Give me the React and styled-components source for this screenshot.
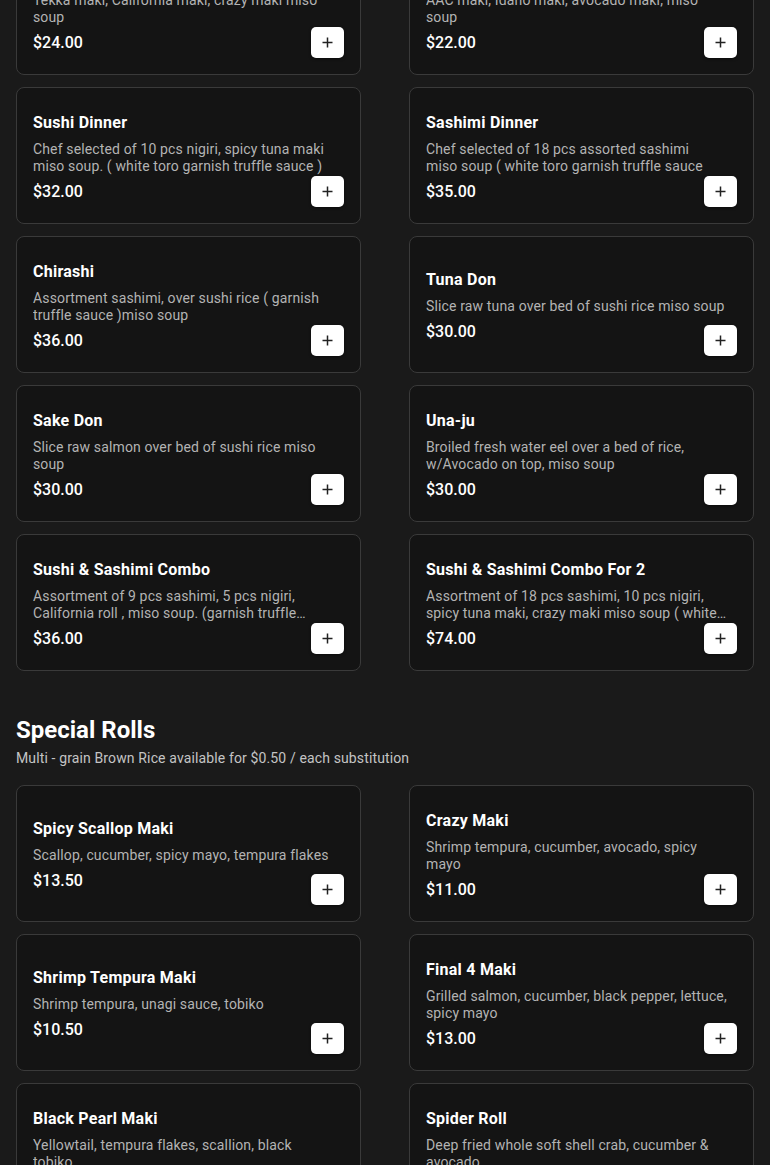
import React from 'react';
import styled, { createGlobalStyle } from 'styled-components';

const GlobalStyle = createGlobalStyle`
    html, body {
        margin: 0;
        padding: 0;
        background: #1a1a1a;
        font-family: Roboto, "Liberation Sans", Arial, sans-serif;
        color: #fff;
    }
    * {
        box-sizing: border-box;
    }
`;

const Page = styled.main`
    padding: 0 16px 40px;
    overflow: hidden;
`;

const Section = styled.section`
    /* the view is scrolled: the first section's header sits above the fold */
    &:first-child {
        margin-top: -62px;
    }
`;

const SectionTitle = styled.h2`
    margin: 45px 0 0;
    font-size: 24px;
    line-height: 28px;
    font-weight: 700;
    color: #fff;
`;

const SectionNote = styled.p`
    margin: 4px 0 17px;
    font-size: 14px;
    line-height: 20px;
    letter-spacing: 0.13px;
    color: #c4c4c4;
`;

const Grid = styled.div`
    display: grid;
    grid-template-columns: 1fr 1fr;
    column-gap: 48px;
    row-gap: 12px;
`;

const Card = styled.article`
    display: grid;
    height: 137px;
    padding: 16px;
    background: #141414;
    border: 1px solid #3a3a3a;
    border-radius: 8px;
`;

const Info = styled.div`
    grid-area: 1 / 1;
    align-self: center;
    padding: 3px 9px 0 0;
    min-width: 0;
`;

const Name = styled.h3`
    margin: 0;
    font-size: 16px;
    line-height: 20px;
    font-weight: 700;
    letter-spacing: 0.25px;
    color: #fff;
`;

const Description = styled.p`
    margin: 8px 0 0;
    font-size: 14px;
    line-height: 17px;
    letter-spacing: 0.14px;
    white-space: pre-line;
    color: #b3b3b3;
    display: -webkit-box;
    -webkit-box-orient: vertical;
    -webkit-line-clamp: 2;
    overflow: hidden;
`;

const Price = styled.div`
    margin-top: 7px;
    font-size: 16px;
    line-height: 20px;
    font-weight: 500;
    color: #fff;
`;

const AddButton = styled.button`
    grid-area: 1 / 1;
    justify-self: end;
    align-self: end;
    width: 33px;
    height: 31px;
    padding: 0;
    border: none;
    border-radius: 5px;
    background: #fff;
    box-shadow: 0 1px 3px rgba(0, 0, 0, 0.5);
    display: flex;
    align-items: center;
    justify-content: center;
    cursor: pointer;
`;

const PlusIcon = () => (
    <svg width="11" height="11" viewBox="0 0 11 11" fill="none">
        <path d="M5.5 0.5v10M0.5 5.5h10" stroke="#222" strokeWidth="1.5" />
    </svg>
);

const MenuCard = ({ item }) => (
    <Card>
        <Info>
            <Name>{item.name}</Name>
            <Description>{item.description}</Description>
            <Price>{item.price}</Price>
        </Info>
        <AddButton aria-label={`Add ${item.name}`}>
            <PlusIcon />
        </AddButton>
    </Card>
);

const sections = [
    {
        title: null,
        items: [
            { name: 'Maki Combo', description: 'Tekka maki, California maki, crazy maki miso soup', price: '$24.00' },
            { name: 'Vegetable Maki Combo', description: 'AAC maki, Idaho maki, avocado maki, miso\nsoup', price: '$22.00' },
            { name: 'Sushi Dinner', description: 'Chef selected of 10 pcs nigiri, spicy tuna maki miso soup. ( white toro garnish truffle sauce )', price: '$32.00' },
            { name: 'Sashimi Dinner', description: 'Chef selected of 18 pcs assorted sashimi\nmiso soup ( white toro garnish truffle sauce', price: '$35.00' },
            { name: 'Chirashi', description: 'Assortment sashimi, over sushi rice ( garnish truffle sauce )miso soup', price: '$36.00' },
            { name: 'Tuna Don', description: 'Slice raw tuna over bed of sushi rice miso soup', price: '$30.00' },
            { name: 'Sake Don', description: 'Slice raw salmon over bed of sushi rice miso soup', price: '$30.00' },
            { name: 'Una-ju', description: 'Broiled fresh water eel over a bed of rice, w/Avocado on top, miso soup', price: '$30.00' },
            { name: 'Sushi & Sashimi Combo', description: 'Assortment of 9 pcs sashimi, 5 pcs nigiri, California roll , miso soup. (garnish truffle sauce )', price: '$36.00' },
            { name: 'Sushi & Sashimi Combo For 2', description: 'Assortment of 18 pcs sashimi, 10 pcs nigiri, spicy tuna maki, crazy maki miso soup ( white toro garnish truffle sauce )', price: '$74.00' },
        ],
    },
    {
        title: 'Special Rolls',
        note: 'Multi - grain Brown Rice available for $0.50 / each substitution',
        items: [
            { name: 'Spicy Scallop Maki', description: 'Scallop, cucumber, spicy mayo, tempura flakes', price: '$13.50' },
            { name: 'Crazy Maki', description: 'Shrimp tempura, cucumber, avocado, spicy mayo', price: '$11.00' },
            { name: 'Shrimp Tempura Maki', description: 'Shrimp tempura, unagi sauce, tobiko', price: '$10.50' },
            { name: 'Final 4 Maki', description: 'Grilled salmon, cucumber, black pepper, lettuce, spicy mayo', price: '$13.00' },
            { name: 'Black Pearl Maki', description: 'Yellowtail, tempura flakes, scallion, black\ntobiko', price: '$14.00' },
            { name: 'Spider Roll', description: 'Deep fried whole soft shell crab, cucumber & avocado', price: '$12.00' },
        ],
    },
];

export default function App() {
    return (
        <>
            <GlobalStyle />
            <Page>
                {sections.map((section, i) => (
                    <Section key={i}>
                        {section.title && <SectionTitle>{section.title}</SectionTitle>}
                        {section.note && <SectionNote>{section.note}</SectionNote>}
                        <Grid>
                            {section.items.map((item) => (
                                <MenuCard key={item.name} item={item} />
                            ))}
                        </Grid>
                    </Section>
                ))}
            </Page>
        </>
    );
}
